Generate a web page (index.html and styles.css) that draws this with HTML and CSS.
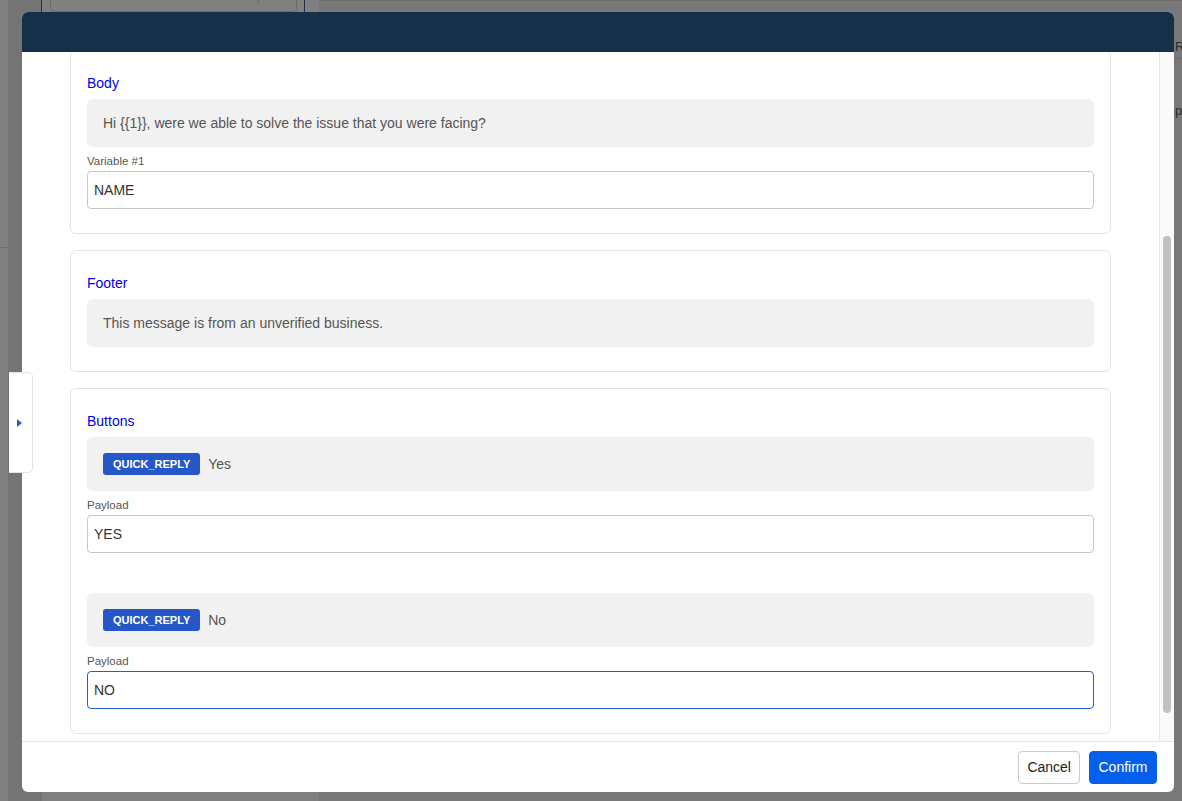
FILE: index.html
```html
<!DOCTYPE html>
<html lang="en">
<head>
<meta charset="utf-8">
<title>Template variables</title>
<link rel="stylesheet" href="styles.css">
</head>
<body>
<div class="page">
  <div class="bg-col bg-a"><div class="bg-hline"></div></div>
  <div class="bg-col bg-b"><div class="bg-vline"></div></div>
  <div class="bg-col bg-c"><div class="bg-box"><span class="bg-tick"></span></div><div class="bg-vline"></div></div>
  <div class="bg-col bg-d"></div>
  <div class="bg-col bg-e">
    <div class="bg-right">
      <span class="bg-text bg-r">R</span>
      <div class="bg-sep"></div>
      <span class="bg-text bg-pt">pt</span>
    </div>
  </div>
</div>

<div class="side-tab"><span class="tri"></span></div>

<div class="modal">
  <div class="modal-header"></div>
  <div class="modal-body">
    <div class="modal-scroll">
      <section class="card card-first">
        <h3 class="card-title">Body</h3>
        <div class="msg">Hi {{1}}, were we able to solve the issue that you were facing?</div>
        <label class="field-label">Variable #1</label>
        <div class="input">NAME</div>
      </section>

      <section class="card">
        <h3 class="card-title">Footer</h3>
        <div class="msg">This message is from an unverified business.</div>
      </section>

      <section class="card">
        <h3 class="card-title">Buttons</h3>
        <div class="btn-item">
          <div class="msg msg-btn"><span class="badge">QUICK_REPLY</span><span>Yes</span></div>
          <label class="field-label">Payload</label>
          <div class="input">YES</div>
        </div>
        <div class="btn-item last">
          <div class="msg msg-btn"><span class="badge">QUICK_REPLY</span><span>No</span></div>
          <label class="field-label">Payload</label>
          <div class="input focused">NO</div>
        </div>
      </section>
    </div>
    <div class="scroll-track"><div class="scroll-thumb"></div></div>
  </div>
  <div class="modal-footer">
    <button class="btn btn-cancel">Cancel</button>
    <button class="btn btn-confirm">Confirm</button>
  </div>
</div>
</body>
</html>
```

FILE: styles.css
```css
* { box-sizing: border-box; }
html, body {
  margin: 0;
  padding: 0;
  width: 1182px;
  height: 801px;
  overflow: hidden;
  font-family: "Liberation Sans", Arial, Helvetica, sans-serif;
  background: #777777;
}

/* dimmed page underneath */
.page {
  display: flex;
  width: 1182px;
  height: 801px;
}
.bg-col { height: 100%; position: relative; }
.bg-a { width: 8px; background: #808080; }
.bg-hline { margin-top: 247px; height: 1px; background: #6f6f6f; }
.bg-b { width: 34px; background: #747474; }
.bg-vline { position: absolute; right: 0; top: 0; width: 1px; height: 30px; background: #1f2d52; }
.bg-c { width: 263px; background: #808080; padding: 0 8px; }
.bg-box {
  margin-top: -10px;
  height: 22px;
  border: 1px solid #6b6b6b;
  border-radius: 4px;
  position: relative;
}
.bg-tick { position: absolute; left: 207px; top: 9px; width: 1px; height: 3px; background: #6b6b6b; }
.bg-d { width: 14px; background: #808080; }
.bg-e { flex: 1; background: #787878; border-top: 1px solid #6e6e6e; }
.bg-right { position: absolute; right: 0; top: 38px; width: 8px; height: 200px; overflow: hidden; }
.bg-text { position: absolute; left: 1px; font-size: 13px; line-height: 16px; color: #2b2b2b; }
.bg-r { top: 0; }
.bg-sep { position: absolute; left: 0; top: 19px; width: 8px; height: 1px; background: #6a6a6a; }
.bg-pt { top: 64px; }

/* left drawer toggle */
.side-tab {
  position: absolute;
  left: 9px;
  top: 372px;
  width: 24px;
  height: 101px;
  background: #ffffff;
  border: 1px solid #e2e2e2;
  border-left: none;
  border-radius: 0 5px 5px 0;
  z-index: 3;
  display: flex;
  align-items: center;
  padding-left: 8px;
}
.tri {
  width: 0;
  height: 0;
  border-top: 4px solid transparent;
  border-bottom: 4px solid transparent;
  border-left: 5px solid #1f5ce6;
}

/* modal */
.modal {
  position: absolute;
  left: 22px;
  top: 12px;
  width: 1152px;
  height: 780px;
  background: #ffffff;
  border-radius: 6px;
  overflow: hidden;
  display: flex;
  flex-direction: column;
  z-index: 2;
}
.modal-header {
  height: 40px;
  flex: none;
  background: #173049;
  position: relative;
  z-index: 1;
}
.modal-body {
  flex: 1;
  display: flex;
  overflow: hidden;
}
.modal-scroll {
  flex: 1;
  padding: 0 48px 0 48px;
  display: flex;
  flex-direction: column;
  gap: 16px;
  overflow: hidden;
}
.scroll-track {
  width: 15px;
  flex: none;
  background: #fafafa;
  border-left: 1px solid #e6e6e6;
  padding: 184px 3px 0 3px;
}
.scroll-thumb {
  width: 8px;
  height: 477px;
  background: #c1c1c1;
  border-radius: 4px;
}

.card {
  border: 1px solid #e3e3e3;
  border-radius: 6px;
  padding: 22px 16px 24px 16px;
  flex: none;
}
.card-first { margin-top: -2px; }
.card-title {
  margin: 0 0 6px 0;
  font-size: 14px;
  line-height: 20px;
  font-weight: normal;
  color: #0000ee;
}
.msg {
  background: #f1f1f1;
  border-radius: 6px;
  padding: 14px 16px;
  font-size: 14px;
  line-height: 20px;
  color: #555555;
}
.msg-btn {
  display: flex;
  align-items: center;
  gap: 8px;
  padding: 16px 16px;
  line-height: 22px;
}
.badge {
  background: #2557c8;
  color: #ffffff;
  font-size: 11px;
  font-weight: bold;
  line-height: 22px;
  height: 22px;
  padding: 0 10px;
  border-radius: 3px;
}
.field-label {
  display: block;
  margin: 7px 0 3px 0;
  font-size: 11.5px;
  line-height: 14px;
  color: #555555;
}
.input {
  height: 38px;
  border: 1px solid #c6c6c6;
  border-radius: 4px;
  padding: 0 6px;
  display: flex;
  align-items: center;
  font-size: 14px;
  color: #333333;
  background: #ffffff;
}
.input.focused { border-color: #1a5fd8; }
.btn-item { margin-bottom: 40px; }
.btn-item.last { margin-bottom: 0; }

.modal-footer {
  height: 51px;
  flex: none;
  border-top: 1px solid #e5e5e5;
  display: flex;
  justify-content: flex-end;
  align-items: center;
  gap: 9px;
  padding: 0 17px 0 0;
}
.btn {
  height: 33px;
  border-radius: 4px;
  font-family: "Liberation Sans", Arial, sans-serif;
  font-size: 14px;
  padding: 0 8px;
  cursor: pointer;
}
.btn-cancel {
  background: #ffffff;
  border: 1px solid #cccccc;
  color: #222222;
}
.btn-confirm {
  background: #0460ea;
  border: 1px solid #0460ea;
  color: #ffffff;
  padding: 0 8.5px;
}
```
